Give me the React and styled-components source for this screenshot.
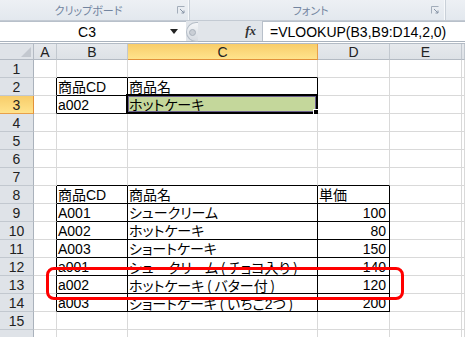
import React from "react";
import styled, { createGlobalStyle } from "styled-components";

const GlobalStyle = createGlobalStyle`
  html, body {
    margin: 0;
    padding: 0;
    overflow: hidden;
    background: #ffffff;
  }
  body {
    font-family: "Liberation Sans", "Noto Sans CJK JP", sans-serif;
  }
`;

const Page = styled.div`
  width: 465px;
  height: 337px;
  display: flex;
  flex-direction: column;
  overflow: hidden;
`;

const RibbonStrip = styled.div`
  height: 20px;
  display: flex;
  background: linear-gradient(#edf0f4, #e3e8ee);
  border-bottom: 1px solid #c3cad3;
`;

const Group = styled.div`
  width: ${(p) => p.$width}px;
  display: flex;
  align-items: center;
  border-right: 1px solid #c9d0d8;
  box-shadow: inset -1px 0 0 #f7f9fb;
`;

const GroupLabel = styled.div`
  flex: 1;
  text-align: center;
  font-family: "Noto Sans CJK JP", sans-serif;
  font-feature-settings: "palt";
  font-size: 11px;
  line-height: 20px;
  color: #7385a0;
`;

const Launcher = styled.svg`
  width: 8px;
  height: 8px;
  margin-right: ${(p) => p.$gap}px;
`;

const FormulaBar = styled.div`
  height: 20px;
  display: flex;
  background: #e1e5ea;
  border-bottom: 1px solid #a9b2bd;
`;

const NameBox = styled.div`
  width: 186px;
  display: flex;
  align-items: center;
  background: #ffffff;
  border-top: 1px solid #b8c0ca;
  font-size: 14px;
  color: #000;
`;

const NameText = styled.div`
  flex: 1;
  text-align: center;
  padding-left: 4px;
`;

const DropArrow = styled.div`
  width: 0;
  height: 0;
  margin-right: 8px;
  border-left: 4px solid transparent;
  border-right: 4px solid transparent;
  border-top: 5px solid #222;
`;

const Splitter = styled.div`
  width: 11px;
  height: 18px;
  margin-top: 1px;
  border-radius: 10px 0 0 10px;
  border: 1px solid #b5bdc7;
  border-right: none;
  background: linear-gradient(#f4f6f8, #d6dbe1);
  display: flex;
  align-items: center;
  justify-content: center;
`;

const SplitterDot = styled.div`
  width: 5px;
  height: 5px;
  border-radius: 50%;
  background: #c9ced5;
  border: 1px solid #aab2bc;
`;

const FxArea = styled.div`
  width: 64px;
  display: flex;
  align-items: center;
  justify-content: flex-end;
  padding-right: 6px;
  box-sizing: border-box;
`;

const Fx = styled.span`
  font-family: "Liberation Serif", serif;
  font-style: italic;
  font-weight: bold;
  font-size: 13px;
  color: #333;
`;

const FormulaInput = styled.div`
  flex: 1;
  display: flex;
  align-items: center;
  background: #ffffff;
  border-left: 1px solid #b8c0ca;
  border-top: 1px solid #b8c0ca;
  padding-left: 7px;
  font-size: 14px;
  color: #000;
  white-space: nowrap;
`;

const Divider = styled.div`
  background: #e6e9ed;
  border-top: 1px solid #ffffff;
  border-bottom: 1px solid #b3bbc5;
  box-sizing: border-box;
  height: 6px;
`;

const Sheet = styled.div`
  position: relative;
  display: grid;
  grid-template-columns: 34px 23px 71px 190px 72px 72px 1fr;
  grid-template-rows: 16px;
  grid-auto-rows: 18px;
`;

const Corner = styled.div`
  background: #dfe3e8;
  border-right: 1px solid #b3bac3;
  border-bottom: 1px solid #b3bac3;
  box-sizing: border-box;
  display: flex;
  align-items: flex-end;
  justify-content: flex-end;
  padding: 0 2px 2px 0;
`;

const CornerTri = styled.div`
  width: 0;
  height: 0;
  border-left: 10px solid transparent;
  border-bottom: 10px solid #c3c8cf;
`;

const ColHead = styled.div`
  box-sizing: border-box;
  background: ${(p) =>
    p.$active ? "linear-gradient(#f8cd6a, #ffe38c)" : "linear-gradient(#e6e9ed, #dde1e6)"};
  border-right: 1px solid ${(p) => (p.$active ? "#e8a04a" : "#c2c8cf")};
  border-bottom: 1px solid ${(p) => (p.$active ? "#e2913a" : "#b3bac3")};
  font-size: 14px;
  line-height: 16px;
  text-align: center;
  color: #222;
`;

const RowHead = styled.div`
  box-sizing: border-box;
  background: ${(p) => (p.$active ? "linear-gradient(#f8cd6a, #ffe38c)" : "#dfe3e8")};
  border-right: 1px solid ${(p) => (p.$active ? "#e2913a" : "#aab2bc")};
  border-bottom: 1px solid ${(p) => (p.$active ? "#e8a04a" : "#c2c8cf")};
  font-size: 14px;
  line-height: 18px;
  text-align: center;
  color: #222;
`;

const Cell = styled.div`
  position: relative;
  box-sizing: border-box;
  background: ${(p) => p.$fill || "#ffffff"};
  border-right: 1px solid ${(p) => (p.$edgeRight ? "#000000" : "#d9d9d9")};
  border-bottom: 1px solid ${(p) => (p.$edgeBottom ? "#000000" : "#d9d9d9")};
  font-family: "Liberation Sans", "Noto Sans CJK JP", sans-serif;
  font-feature-settings: "palt";
  font-size: 14px;
  line-height: 18px;
  padding: 0 ${(p) => (p.$num ? "3px" : "1px")} 0 1px;
  text-align: ${(p) => (p.$num ? "right" : "left")};
  white-space: nowrap;
  color: #000;
`;

const Paren = styled.span`
  font-feature-settings: normal;
  font-family: "Noto Sans CJK JP", sans-serif;
  display: inline-block;
  width: 10px;
  text-align: center;
`;

const Selection = styled.div`
  position: absolute;
  left: -2px;
  top: -2px;
  right: -1px;
  bottom: -1px;
  border: 2px solid #000;
  box-shadow: inset 0 0 0 1px #6a5f8c;
  pointer-events: none;
`;

const FillHandle = styled.div`
  position: absolute;
  right: -4px;
  bottom: -4px;
  width: 5px;
  height: 5px;
  background: #000;
  border: 1px solid #fff;
`;

const Highlight = styled.div`
  position: absolute;
  left: 46px;
  top: 223px;
  width: 358px;
  height: 33px;
  box-sizing: border-box;
  border: 3px solid #ff0000;
  border-radius: 8px;
  pointer-events: none;
`;

const COLS = ["A", "B", "C", "D", "E", "F"];

const withNote = (name, note) => (
  <>
    {name}
    <Paren>(</Paren>
    {note}
    <Paren>)</Paren>
  </>
);

const DATA = {
  2: { B: "商品CD", C: "商品名" },
  3: { B: "a002", C: "ホットケーキ" },
  8: { B: "商品CD", C: "商品名", D: "単価" },
  9: { B: "A001", C: "シュークリーム", D: 100 },
  10: { B: "A002", C: "ホットケーキ", D: 80 },
  11: { B: "A003", C: "ショートケーキ", D: 150 },
  12: { B: "a001", C: withNote("シュークリーム", "チョコ入り"), D: 140 },
  13: { B: "a002", C: withNote("ホットケーキ", "バター付"), D: 120 },
  14: { B: "a003", C: withNote("ショートケーキ", "いちご2つ"), D: 200 },
};

const inTable = (r, c) =>
  (r >= 2 && r <= 3 && c >= 1 && c <= 2) || (r >= 8 && r <= 14 && c >= 1 && c <= 3);

const LauncherIcon = ({ gap }) => (
  <Launcher $gap={gap} viewBox="0 0 8 8">
    <path d="M0.5 7.5V0.5H7.5" fill="none" stroke="#a3adba" />
    <path d="M3 3L7 7M7 4.5V7H4.5" fill="none" stroke="#8794a6" />
  </Launcher>
);

export default function App() {
  const rows = [];
  for (let r = 1; r <= 16; r++) {
    rows.push(
      <RowHead key={`h${r}`} $active={r === 3}>
        {r <= 15 ? r : null}
      </RowHead>
    );
    COLS.forEach((col, c) => {
      const value = DATA[r] ? DATA[r][col] : undefined;
      const selected = r === 3 && col === "C";
      rows.push(
        <Cell
          key={`${col}${r}`}
          $edgeRight={inTable(r, c) || inTable(r, c + 1)}
          $edgeBottom={inTable(r, c) || inTable(r + 1, c)}
          $num={typeof value === "number"}
          $fill={selected ? "#c4d79b" : undefined}
        >
          {value}
          {selected && (
            <Selection>
              <FillHandle />
            </Selection>
          )}
        </Cell>
      );
    });
  }

  return (
    <Page>
      <GlobalStyle />
      <RibbonStrip>
        <Group $width={189}>
          <GroupLabel>クリップボード</GroupLabel>
          <LauncherIcon gap={4} />
        </Group>
        <Group $width={255}>
          <GroupLabel>フォント</GroupLabel>
          <LauncherIcon gap={6} />
        </Group>
      </RibbonStrip>
      <FormulaBar>
        <NameBox>
          <NameText>C3</NameText>
          <DropArrow />
        </NameBox>
        <Splitter>
          <SplitterDot />
        </Splitter>
        <FxArea>
          <Fx>fx</Fx>
        </FxArea>
        <FormulaInput>=VLOOKUP(B3,B9:D14,2,0)</FormulaInput>
      </FormulaBar>
      <Divider />
      <Sheet>
        <Corner>
          <CornerTri />
        </Corner>
        {COLS.map((col) => (
          <ColHead key={col} $active={col === "C"}>
            {col === "F" ? null : col}
          </ColHead>
        ))}
        {rows}
        <Highlight />
      </Sheet>
    </Page>
  );
}
